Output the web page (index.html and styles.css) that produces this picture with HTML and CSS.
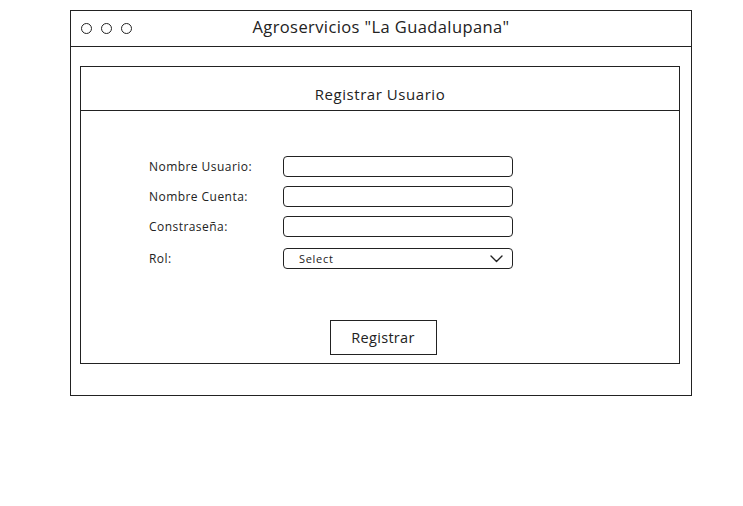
FILE: index.html
```html
<!DOCTYPE html>
<html lang="es">
<head>
<meta charset="utf-8">
<title>Agroservicios</title>
<link rel="stylesheet" href="styles.css">
</head>
<body>
<div class="window">
  <div class="titlebar">
    <div class="dots"><span class="dot"></span><span class="dot"></span><span class="dot"></span></div>
    <div class="apptitle">Agroservicios "La Guadalupana"</div>
  </div>
  <div class="content">
    <div class="panel">
      <div class="panel-head">Registrar Usuario</div>
      <div class="form">
        <div class="row"><label class="lbl">Nombre Usuario:</label><div class="input"></div></div>
        <div class="row"><label class="lbl">Nombre Cuenta:</label><div class="input"></div></div>
        <div class="row"><label class="lbl">Constraseña:</label><div class="input"></div></div>
        <div class="row row-sel"><label class="lbl">Rol:</label>
          <div class="input select"><span>Select</span>
            <svg class="chev" width="13" height="8" viewBox="0 0 13 8"><path d="M1 1 L6.5 6.5 L12 1" fill="none" stroke="#222" stroke-width="1.4" stroke-linecap="round" stroke-linejoin="round"/></svg>
          </div>
        </div>
      </div>
      <div class="actions"><div class="btn">Registrar</div></div>
    </div>
  </div>
</div>
</body>
</html>
```
FILE: styles.css
```css
* { box-sizing: border-box; }
body {
  margin: 0;
  background: #fff;
  font-family: "Open Sans", "Liberation Sans", sans-serif;
  color: #222;
}
.window {
  margin: 10px 0 0 70px;
  width: 622px;
  height: 386px;
  border: 1.5px solid #222;
  display: flex;
  flex-direction: column;
}
.titlebar {
  height: 36px;
  border-bottom: 1.5px solid #222;
  display: flex;
  align-items: center;
  position: relative;
}
.dots {
  display: flex;
  gap: 9px;
  padding-left: 10px;
}
.dot {
  width: 11px;
  height: 11px;
  border: 1.5px solid #222;
  border-radius: 50%;
}
.apptitle {
  position: absolute;
  left: 0;
  right: 0;
  top: 4px;
  text-align: center;
  font-size: 16.5px;
  letter-spacing: 0.4px;
}
.content {
  padding: 19px 11px 0 9px;
}
.panel {
  width: 600px;
  height: 298px;
  border: 1.5px solid #222;
  display: flex;
  flex-direction: column;
}
.panel-head {
  height: 44px;
  border-bottom: 1.5px solid #222;
  display: flex;
  align-items: flex-end;
  justify-content: center;
  padding-bottom: 6px;
  font-size: 15px;
  letter-spacing: 0.55px;
}
.form {
  padding: 45px 0 0 68px;
  display: flex;
  flex-direction: column;
  gap: 9px;
}
.row {
  display: flex;
  align-items: center;
  height: 21px;
}
.row-sel { margin-top: 2px; }
.lbl {
  width: 134px;
  font-size: 12px;
  letter-spacing: 0.45px;
}
.input {
  width: 230px;
  height: 21px;
  border: 1.5px solid #222;
  border-radius: 4px;
}
.select {
  display: flex;
  align-items: center;
  justify-content: space-between;
  padding: 0 9px 0 15px;
  font-size: 11px;
  letter-spacing: 0.7px;
}
.actions {
  display: flex;
  justify-content: center;
  padding-top: 51px;
  padding-left: 6px;
}
.btn {
  width: 107px;
  height: 35px;
  border: 1.5px solid #222;
  display: flex;
  align-items: center;
  justify-content: center;
  font-size: 14.5px;
  letter-spacing: 0.3px;
}
```
